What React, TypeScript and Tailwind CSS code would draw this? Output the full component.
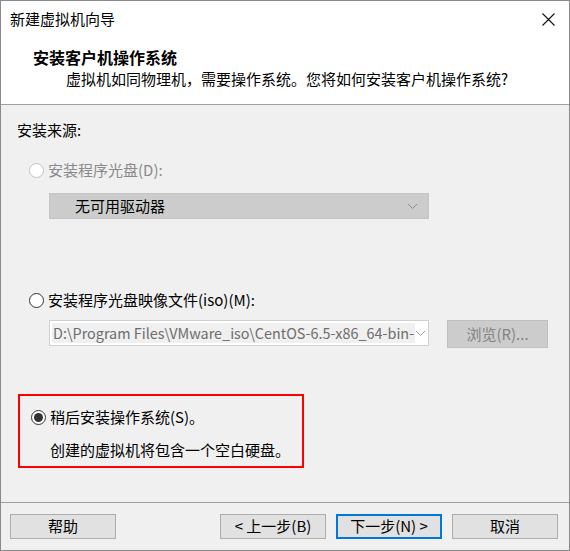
import React from "react";

const FONT = { fontFamily: '"Noto Sans CJK SC", "Noto Sans", sans-serif' };

function Radio({ checked, disabled }: { checked?: boolean; disabled?: boolean }) {
  return (
    <span
      className={
        "flex h-[15px] w-[15px] shrink-0 items-center justify-center rounded-full border bg-white " +
        (disabled ? "border-[#c2c2c2]" : "border-[#333333]")
      }
    >
      {checked && <span className="h-[9px] w-[9px] rounded-full bg-[#333333]" />}
    </span>
  );
}

function Chevron({ color }: { color: string }) {
  return (
    <svg width="11" height="7" viewBox="0 0 11 7" fill="none">
      <path d="M1 1 L5.5 5.5 L10 1" stroke={color} strokeWidth="1" />
    </svg>
  );
}

function Btn({ children, def }: { children: React.ReactNode; def?: boolean }) {
  return (
    <div
      className={
        "flex h-[25px] w-[106px] items-center justify-center bg-[#e1e1e1] text-[15px] text-black " +
        (def ? "border-2 border-[#0078d7]" : "border border-[#adadad]")
      }
    >
      {children}
    </div>
  );
}

export default function App() {
  return (
    <div
      className="flex h-[551px] w-[570px] flex-col border border-[#8a8a8a] bg-[#f0f0f0] text-black"
      style={FONT}
    >
      <div className="flex h-[104px] shrink-0 flex-col border-b border-[#a0a0a0] bg-white">
        <div className="flex h-[36px] items-center justify-between pl-[9px] pr-[14px]">
          <span className="text-[15px] leading-[20px]">新建虚拟机向导</span>
          <svg width="13" height="13" viewBox="0 0 13 13">
            <path d="M0.5 0.5 L12.5 12.5 M12.5 0.5 L0.5 12.5" stroke="#111" strokeWidth="1.1" />
          </svg>
        </div>
        <div className="mt-[10px] pl-[32px] text-[16px] font-bold leading-[20px]">安装客户机操作系统</div>
        <div className="mt-[2px] pl-[65px] text-[15px] leading-[20px]">
          虚拟机如同物理机，需要操作系统。您将如何安装客户机操作系统?
        </div>
      </div>

      <div className="flex flex-1 flex-col pl-[16px]">
        <div className="mt-[15px] text-[15px] leading-[20px]">安装来源:</div>

        <div className="mt-[20px] flex h-[20px] items-center gap-[4px] pl-[12px] text-[15px] text-[#8a8a8a]">
          <Radio disabled />
          <span>安装程序光盘(D):</span>
        </div>
        <div className="ml-[32px] mt-[13px] flex h-[26px] w-[380px] items-center justify-between border border-[#c4c4c4] bg-[#cccccc] pl-[25px] pr-[10px] text-[15px]">
          <span>无可用驱动器</span>
          <Chevron color="#8a8a8a" />
        </div>

        <div className="mt-[71px] flex h-[20px] items-center gap-[4px] pl-[12px] text-[15px]">
          <Radio />
          <span>安装程序光盘映像文件(iso)(M):</span>
        </div>
        <div className="ml-[32px] mt-[10px] flex h-[28px] items-start gap-[18px]">
          <div className="flex h-[26px] w-[380px] items-center border border-[#d0d0d0] bg-white p-[2px]">
            <div className="flex h-full w-[363px] items-center overflow-hidden whitespace-nowrap bg-[#f0f0f0] pl-[1px] text-[14.4px] text-[#6d6d6d]">
              D:\Program Files\VMware_iso\CentOS-6.5-x86_64-bin-
            </div>
            <div className="flex flex-1 items-center justify-center">
              <Chevron color="#a0a0a0" />
            </div>
          </div>
          <div className="flex h-[28px] w-[101px] items-center justify-center border border-[#bfbfbf] bg-[#cccccc] text-[15px] text-[#838383]">
            浏览(R)...
          </div>
        </div>

        <div className="ml-[1px] mt-[46px] flex h-[74px] w-[286px] flex-col border-2 border-[#ff0000] pl-[11px]">
          <div className="mt-[11px] flex h-[20px] items-center gap-[4px] text-[15px]">
            <Radio checked />
            <span>稍后安装操作系统(S)。</span>
          </div>
          <div className="mt-[13px] pl-[19px] text-[15px] leading-[20px]">创建的虚拟机将包含一个空白硬盘。</div>
        </div>
      </div>

      <div className="flex h-[48px] shrink-0 items-start border-t border-[#a0a0a0] pl-[9px] pt-[11px]">
        <Btn>帮助</Btn>
        <div className="ml-[104px] flex gap-[10px]">
          <Btn>&lt; 上一步(B)</Btn>
          <Btn def>下一步(N) &gt;</Btn>
          <Btn>取消</Btn>
        </div>
      </div>
    </div>
  );
}
